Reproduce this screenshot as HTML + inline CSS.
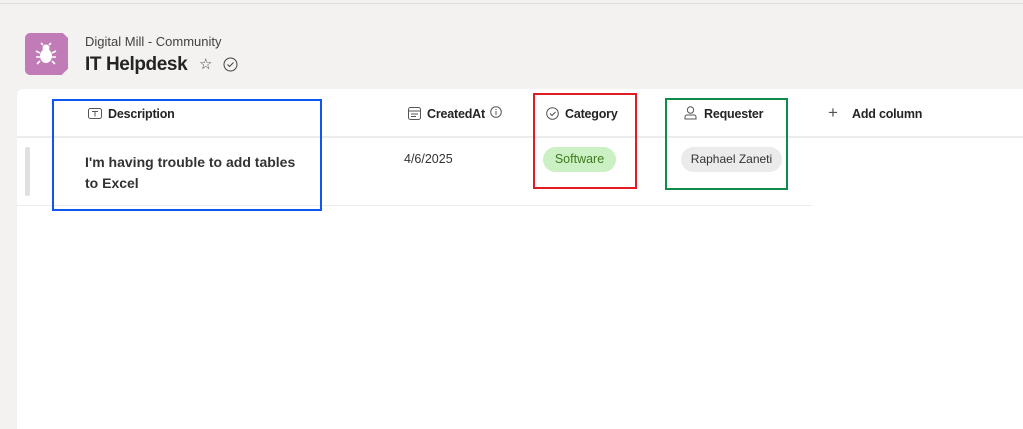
<!DOCTYPE html>
<html><head><style>
body{margin:0;width:1023px;height:424px;background:#f3f2f1;font-family:"Liberation Sans",sans-serif;position:relative;overflow:hidden;color:#242424}
.a{position:absolute}
.panel{left:17px;top:89px;width:1010px;height:340px;background:#fff;border-radius:6px 0 0 0}
.h{font-size:12.5px;font-weight:bold;color:#242424;letter-spacing:-0.2px}
</style></head><body>
<div class="a" style="left:0;top:3px;width:1023px;height:1px;background:#dcdcdc"></div>
<div class="a" style="left:25px;top:33px;width:43px;height:42px;background:#c17cb8;border-radius:5px;clip-path:polygon(0 0,88% 0,100% 12%,100% 85%,85% 100%,0 100%)"></div>
<svg class="a" style="left:35px;top:42px" width="22" height="24" viewBox="0 0 22 24"><g fill="#fff"><ellipse cx="11" cy="14" rx="6" ry="7"/><circle cx="11" cy="6" r="3.5"/></g><g stroke="#fff" stroke-width="1.6"><path d="M5 11L1 9M5 15H1M5 19L2 22M17 11L21 9M17 15H21M17 19L20 22M8 3L6 1M14 3L16 1"/></g></svg>
<div class="a" style="left:85px;top:34px;font-size:13px;color:#424242">Digital Mill - Community</div>
<div class="a" style="left:85px;top:54px;font-size:19px;font-weight:bold;color:#242424;letter-spacing:-0.4px">IT Helpdesk</div>
<div class="a" style="left:199px;top:55px;font-size:15px;color:#424242">☆</div>
<svg class="a" style="left:223px;top:57px" width="15" height="15" viewBox="0 0 15 15"><circle cx="7.5" cy="7.5" r="6.5" fill="none" stroke="#424242"/><path d="M4.5 7.5l2 2 4-4" fill="none" stroke="#424242"/></svg>
<div class="a panel"></div>
<div class="a" style="left:17px;top:136px;width:1006px;height:2px;background:#ececec"></div>
<div class="a" style="left:17px;top:205px;width:795px;height:1px;background:#ececec"></div>
<div class="a" style="left:25px;top:147px;width:5px;height:49px;background:#e0e0e0;border-radius:2px"></div>
<svg class="a" style="left:88px;top:108px" width="14" height="12"><rect x="0.5" y="0.5" width="13" height="10" rx="2" fill="none" stroke="#555"/><path d="M4 3.5h6M7 3.5v5" stroke="#555"/></svg>
<div class="a h" style="left:108px;top:107px">Description</div>
<svg class="a" style="left:408px;top:107px" width="13" height="13"><rect x="0.5" y="0.5" width="12" height="12" rx="2" fill="none" stroke="#555"/><path d="M1 4h11M3 7h7M3 9.5h5" stroke="#555"/></svg>
<div class="a h" style="left:427px;top:107px">CreatedAt</div>
<svg class="a" style="left:490px;top:106px" width="12" height="12"><circle cx="6" cy="6" r="5.3" fill="none" stroke="#555"/><path d="M6 5v4M6 3v1" stroke="#555"/></svg>
<svg class="a" style="left:546px;top:107px" width="13" height="13"><circle cx="6.5" cy="6.5" r="5.8" fill="none" stroke="#555"/><path d="M4 6.5l2 2 3.5-3.5" fill="none" stroke="#555"/></svg>
<div class="a h" style="left:565px;top:107px">Category</div>
<svg class="a" style="left:684px;top:106px" width="13" height="14"><circle cx="6.5" cy="4" r="3.2" fill="none" stroke="#555"/><path d="M1 13v-2a2 2 0 0 1 2-2h7a2 2 0 0 1 2 2v2z" fill="none" stroke="#555"/></svg>
<div class="a h" style="left:704px;top:107px">Requester</div>
<div class="a" style="left:828px;top:103px;font-size:17px;color:#555">+</div>
<div class="a h" style="left:852px;top:107px">Add column</div>
<div class="a" style="left:85px;top:152px;font-size:14px;font-weight:bold;line-height:21px;color:#333">I'm having trouble to add tables<br>to Excel</div>
<div class="a" style="left:404px;top:152px;font-size:12.5px;color:#333">4/6/2025</div>
<div class="a" style="left:543px;top:147px;width:73px;height:25px;border-radius:13px;background:#caf0c4;color:#3f7a1f;font-size:12.5px;line-height:25px;text-align:center">Software</div>
<div class="a" style="left:681px;top:147px;width:101px;height:25px;border-radius:13px;background:#ebebeb;color:#333;font-size:12px;line-height:25px;text-align:center">Raphael Zaneti</div>
<div class="a" style="left:52px;top:99px;width:266px;height:108px;border:2px solid #0b57f0"></div>
<div class="a" style="left:533px;top:93px;width:100px;height:92px;border:2px solid #e31b23"></div>
<div class="a" style="left:665px;top:98px;width:119px;height:88px;border:2px solid #0f8a4a"></div>
</body></html>
